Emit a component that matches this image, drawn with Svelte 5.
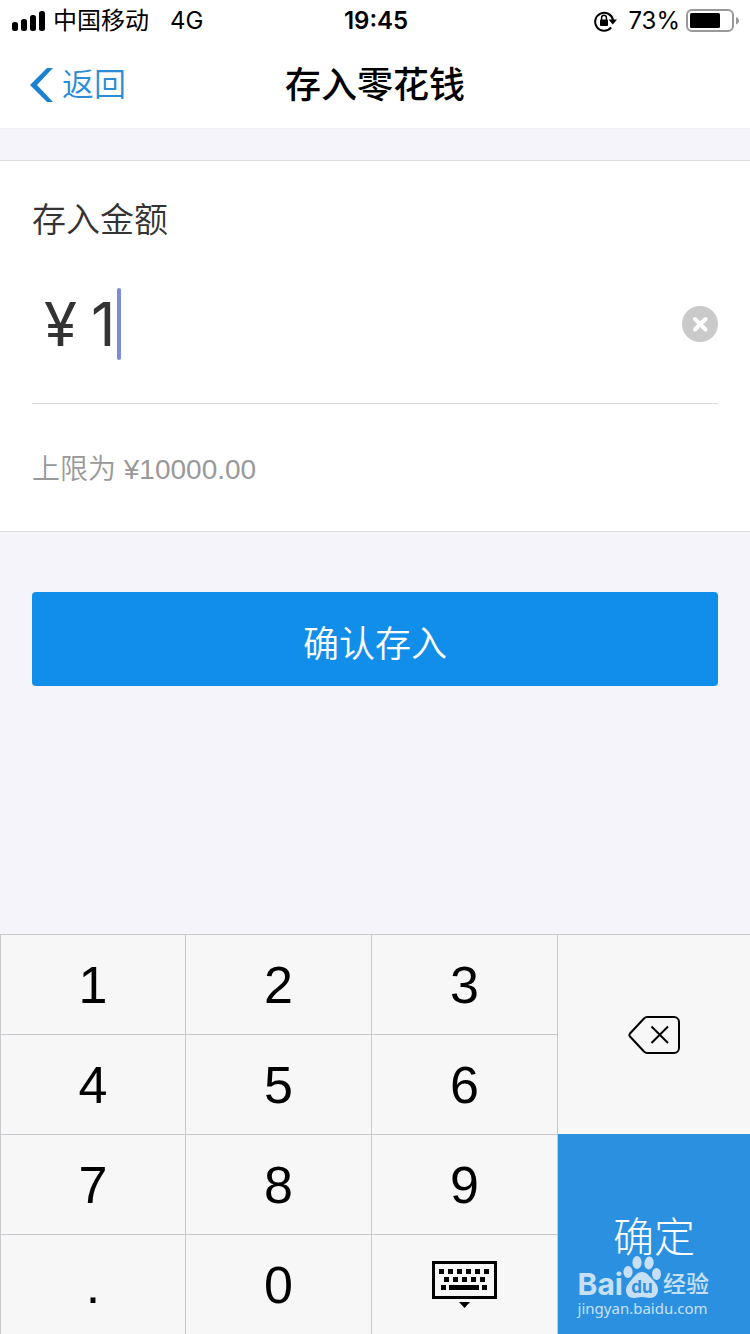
<script lang="ts">
	const MAX_AMOUNT = 10000;

	const keys = ['1', '2', '3', '4', '5', '6', '7', '8', '9', '.', '0'];

	let amount = $state('1');
	let padOpen = $state(true);

	function press(key: string) {
		const next = amount + key;
		if (!/^\d+(\.\d{0,2})?$/.test(next) || Number(next) > MAX_AMOUNT) return;
		amount = next;
	}

	function backspace() {
		amount = amount.slice(0, -1);
	}
</script>

<div class="page">
	<div class="status">
		<div class="status-side">
			<svg class="signal" width="34" height="20" viewBox="0 0 34 20" aria-hidden="true">
				<rect x="0" y="11" width="6" height="9" rx="2.5" />
				<rect x="9" y="8" width="6" height="12" rx="2.5" />
				<rect x="18" y="4" width="6" height="16" rx="2.5" />
				<rect x="27" y="0" width="6" height="20" rx="2.5" />
			</svg>
			<span>中国移动</span>
			<span class="network">4G</span>
		</div>
		<time class="clock">19:45</time>
		<div class="status-side right">
			<svg width="24" height="22" viewBox="0 0 24 22" aria-hidden="true">
				<path d="M17.2 17.4A9 9 0 1 1 19 10" fill="none" stroke="#000" stroke-width="2" />
				<path d="M14.6 9.6h8.4l-4.2 4.8z" />
				<rect x="6" y="9.6" width="8" height="6.4" rx="0.8" />
				<path d="M7.6 10V7.6a2.4 2.4 0 0 1 4.8 0V10" fill="none" stroke="#000" stroke-width="1.5" />
			</svg>
			<span class="percent">73%</span>
			<svg width="54" height="24" viewBox="0 0 54 24" aria-hidden="true">
				<rect x="1" y="1" width="46" height="21" rx="5" fill="none" stroke="#999" stroke-width="2" />
				<rect x="4" y="4" width="30" height="15" rx="1.5" />
				<path d="M50 8c4 1.5 4 6 0 7.5z" fill="#999" />
			</svg>
		</div>
	</div>

	<header class="nav">
		<a class="back" href="#back">
			<svg width="24" height="36" viewBox="0 0 24 36" aria-hidden="true">
				<path d="M17 1h6L7 18l16 17h-6L0 18z" fill="#1b82d2" />
			</svg>
			返回
		</a>
		<h1>存入零花钱</h1>
	</header>

	<main>
		<section class="card">
			<label for="amount">存入金额</label>
			<div class="amount-row">
				<span class="currency">¥</span>
				<input
					id="amount"
					inputmode="none"
					autocomplete="off"
					style:width="{Math.max(amount.length, 1) * 26}px"
					bind:value={amount}
				/>
				<span class="caret"></span>
				<button class="clear" aria-label="清除" onclick={() => (amount = '')}>
					<svg width="36" height="36" viewBox="0 0 36 36" aria-hidden="true">
						<circle cx="18" cy="18" r="18" fill="#cacaca" />
						<path d="M13 13l10.5 10.5M23.5 13L13 23.5" stroke="#fff" stroke-width="4" stroke-linecap="round" />
					</svg>
				</button>
			</div>
			<p class="limit">上限为 ¥{MAX_AMOUNT.toFixed(2)}</p>
		</section>

		<button class="submit">确认存入</button>
	</main>

	{#if padOpen}
		<div class="keypad">
			{#each keys as key (key)}
				<button class="key" onclick={() => press(key)}>{key}</button>
			{/each}
			<button class="key" aria-label="收起键盘" onclick={() => (padOpen = false)}>
				<svg width="66" height="48" viewBox="0 0 66 48" aria-hidden="true">
					<rect x="1.5" y="1.5" width="62" height="35" fill="none" stroke="#000" stroke-width="3" />
					{#each [7, 16, 25, 34, 43, 52] as x}
						<rect {x} y="8" width="5" height="5" />
					{/each}
					{#each [12, 21, 30, 39, 48] as x}
						<rect {x} y="16" width="5" height="5" />
					{/each}
					<rect x="9" y="24" width="5" height="5" />
					<rect x="17" y="24" width="30" height="5" />
					<rect x="50" y="24" width="5" height="5" />
					<path d="M27 41h11l-5.5 6z" />
				</svg>
			</button>
			<button class="key delete" aria-label="删除" onclick={backspace}>
				<svg width="52" height="38" viewBox="0 0 52 38" fill="none" stroke="#000" stroke-width="2" aria-hidden="true">
					<path d="M19 1h27a5 5 0 0 1 5 5v26a5 5 0 0 1-5 5H19q-1.5 0-3-1.500L2 20.500q-1.200-1.500 0-3L16 2.500Q17.500 1 19 1z" />
					<path d="M23.500 10.500l16.500 16.500M40 10.500L23.500 27" />
				</svg>
			</button>
			<button class="key ok">确定</button>

			<div class="watermark">
				<div class="brand">
					<span class="bai">Bai</span>
					<span class="paw">
						<svg width="38" height="42" viewBox="0 0 38 42" aria-hidden="true">
							<ellipse cx="5" cy="16" rx="4.600" ry="6" />
							<ellipse cx="14" cy="6.500" rx="4.600" ry="6.500" />
							<ellipse cx="26" cy="7" rx="4.600" ry="6.500" transform="rotate(8 26 7)" />
							<ellipse cx="33.500" cy="18" rx="4.500" ry="6" />
							<path d="M19 16c5 0 7 4 10 7 4 4 6 7 6 11 0 5-4 8-8 8-3 0-5-1-8-1s-5 1-8 1c-5 0-8-3-8-8 0-4 3-7 6-11 3-3 5-7 10-7z" />
						</svg>
						<span class="du">du</span>
					</span>
					<span class="jingyan">经验</span>
				</div>
				<div class="site">jingyan.baidu.com</div>
			</div>
		</div>
	{/if}
</div>

<style>
	:global(body) {
		margin: 0;
		background: #f4f4fa;
	}

	.page {
		display: flex;
		flex-direction: column;
		min-height: 100vh;
		font-family: Inter, 'Noto Sans CJK SC', sans-serif;
		color: #000;
	}

	button {
		margin: 0;
		padding: 0;
		border: 0;
		background: none;
		font: inherit;
		color: inherit;
		cursor: pointer;
	}

	svg {
		display: block;
		flex: none;
	}

	.status {
		display: grid;
		grid-template-columns: 1fr auto 1fr;
		align-items: center;
		height: 42px;
		padding: 0 10px 0 12px;
		background: #fff;
		font-size: 24px;
		line-height: 40px;
	}

	.status-side {
		display: flex;
		align-items: center;
		gap: 7px;
	}

	.right {
		gap: 6px;
		justify-content: flex-end;
	}

	.network {
		margin-left: 14px;
	}

	.clock {
		font-weight: 600;
	}

	.percent {
		margin-left: 4px;
	}

	.nav {
		display: grid;
		grid-template-columns: 1fr auto 1fr;
		align-items: center;
		height: 86px;
		padding: 0 30px;
		border-bottom: 1px solid #f0f0f4;
		background: #fff;
	}

	.back {
		display: flex;
		align-items: center;
		gap: 8px;
		color: #2b8dd6;
		font-size: 32px;
		font-weight: 350;
		line-height: 44px;
		text-decoration: none;
	}

	h1 {
		margin: 0;
		font-size: 36px;
		font-weight: 500;
		line-height: 48px;
	}

	.card {
		margin-top: 31px;
		padding: 34px 32px 38px;
		border: 1px solid #dddddb;
		border-width: 1px 0;
		background: #fff;
	}

	label {
		display: block;
		font-size: 34px;
		line-height: 50px;
		color: #333;
		font-weight: 350;
	}

	.amount-row {
		display: flex;
		align-items: center;
		height: 158px;
		padding-left: 12px;
		border-bottom: 1px solid #dcdcdc;
		font-size: 60px;
		color: #333;
	}

	.amount-row input {
		margin-left: 14px;
		padding: 0;
		border: 0;
		outline: 0;
		background: none;
		font: inherit;
		color: inherit;
		caret-color: transparent;
	}

	.caret {
		width: 4px;
		height: 72px;
		border-radius: 2px;
		background: #7b8dd6;
	}

	.clear {
		margin-left: auto;
	}

	.limit {
		margin: 44px 0 0;
		padding-bottom: 1px;
		font-family: 'Liberation Sans', 'Noto Sans CJK SC', sans-serif;
		font-size: 28px;
		font-weight: 350;
		line-height: 44px;
		color: #999;
	}

	.submit {
		display: block;
		width: calc(100% - 64px);
		height: 94px;
		margin: 60px 32px;
		padding-top: 4px;
		border-radius: 4px;
		background: #108ee9;
		color: #fff;
		font-size: 36px;
		font-weight: 350;
	}

	.keypad {
		position: relative;
		display: grid;
		grid-template-columns: 185fr 186fr 186fr 193fr;
		grid-auto-rows: 100px;
		margin-top: auto;
		background: #f7f7f7;
	}

	.key {
		display: flex;
		align-items: center;
		justify-content: center;
		border: 1px solid #c9c9cd;
		border-width: 1px 0 0 1px;
		font-family: 'Liberation Sans', 'Noto Sans CJK SC', sans-serif;
		font-size: 52px;
	}

	.delete {
		grid-area: 1 / 4 / 3 / 5;
	}

	.ok {
		grid-area: 3 / 4 / 5 / 5;
		border-top: 0;
		background: #2c90e0;
		color: #fff;
		font-size: 41px;
		font-weight: 300;
	}

	.watermark {
		position: absolute;
		right: 41px;
		bottom: 16px;
		color: #c8e0f7;
		fill: #c8e0f7;
		pointer-events: none;
	}

	.brand {
		display: flex;
		align-items: flex-end;
		height: 42px;
		line-height: 28px;
	}

	.bai {
		font-size: 30px;
		font-weight: 700;
	}

	.paw {
		position: relative;
	}

	.du {
		position: absolute;
		right: 0;
		bottom: 2px;
		left: 0;
		color: #2c90e0;
		font-size: 17px;
		font-weight: 700;
		line-height: 18px;
		text-align: center;
	}

	.jingyan {
		margin-left: 2px;
		font-size: 23px;
		font-weight: 500;
	}

	.site {
		font-family: 'Noto Sans', sans-serif;
		font-size: 15px;
		line-height: 20px;
	}
</style>
